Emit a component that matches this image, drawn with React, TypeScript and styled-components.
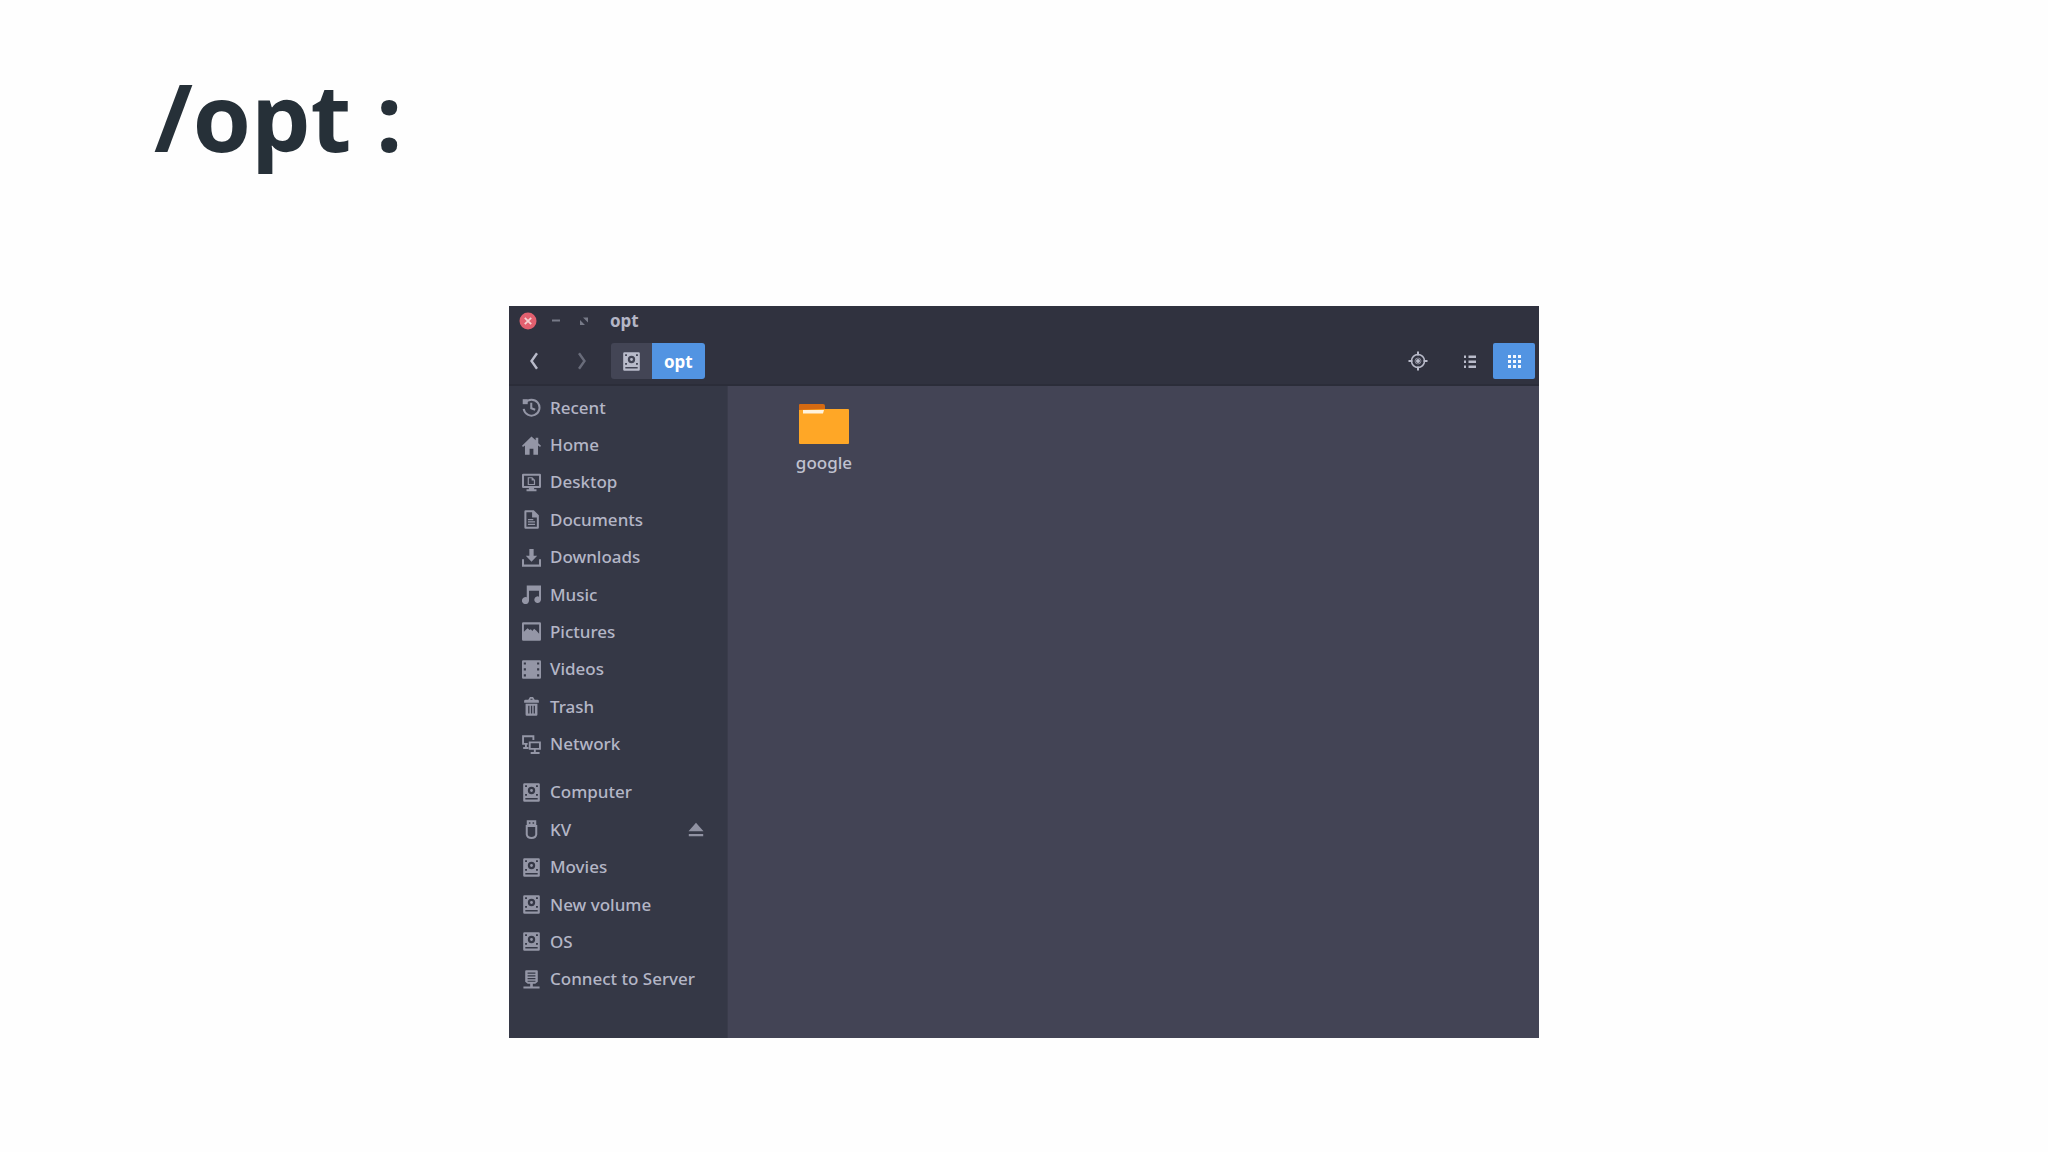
import React from "react";
import styled, { createGlobalStyle } from "styled-components";

const GlobalStyle = createGlobalStyle`
  * { box-sizing: border-box; }
  body { margin: 0; background: #fefefe; }
  button { font: inherit; color: inherit; border: 0; padding: 0; background: none; cursor: pointer; }
  svg { display: block; flex: none; }
`;

const uiFont = `"Noto Sans", "Open Sans", sans-serif`;

const Slide = styled.main`
  min-height: 100vh;
  display: flex;
  flex-direction: column;
  padding: 56px 154px 114px;
  font-family: ${uiFont};
`;

const SlideTitle = styled.h1`
  margin: 0 0 130px;
  font-family: "Open Sans", "Noto Sans", sans-serif;
  font-size: 94px;
  line-height: 120px;
  font-weight: 700;
  color: #263038;
`;

const Window = styled.section`
  width: 59.2%;
  aspect-ratio: 1030 / 732;
  align-self: center;
  display: flex;
  flex-direction: column;
  background: #434455;
  color: #b4b6c6;
`;

const Header = styled.header`
  background: #30323f;
  border-bottom: 2px solid #2b2d39;
`;

const TitleBar = styled.div`
  display: flex;
  align-items: center;
  height: 29px;
  padding-left: 9px;
`;

const WindowControls = styled.div`
  display: flex;
  gap: 8px;
  margin-right: 16px;
`;

const ControlButton = styled.button`
  width: 20px;
  height: 20px;
  display: grid;
  place-items: center;
  color: #777a88;
`;

const WindowTitle = styled.h2`
  margin: 0;
  font-size: 17px;
  line-height: 24px;
  font-weight: 700;
`;

const Toolbar = styled.nav`
  display: flex;
  align-items: center;
  padding: 8px 4px 5px;
`;

const ToolButton = styled.button<{ $active?: boolean; $dim?: boolean }>`
  width: 42px;
  height: 36px;
  display: grid;
  place-items: center;
  border-radius: 2px;
  color: ${(p) => (p.$active ? "#f4f8fe" : p.$dim ? "#696c7a" : "#b9bbca")};
  background: ${(p) => (p.$active ? "#5294e2" : "transparent")};
`;

const History = styled.div`
  display: flex;
  gap: 6px;
  margin-right: 8px;
`;

const PathBar = styled.div`
  display: flex;
  border-radius: 3px;
  overflow: hidden;
`;

const PathButton = styled.button<{ $current?: boolean }>`
  height: 36px;
  display: grid;
  place-items: center;
  padding: 0 ${(p) => (p.$current ? "12px" : "11px")};
  font-size: 17px;
  font-weight: 700;
  color: ${(p) => (p.$current ? "#ffffff" : "#b9bbca")};
  background: ${(p) => (p.$current ? "#5294e2" : "#434555")};
`;

const ViewTools = styled.div`
  display: flex;
  gap: 2px;
  margin-left: auto;
`;

const LocateTool = styled.div`
  margin-right: 8px;
`;

const Body = styled.div`
  flex: 1;
  display: flex;
`;

const Sidebar = styled.aside`
  width: 219px;
  display: flex;
  flex-direction: column;
  gap: 11px;
  padding: 3px 0 40px;
  background: #353846;
  border-right: 1px solid #3a3c4b;
`;

const PlaceList = styled.ul<{ $rows: number }>`
  flex: ${(p) => p.$rows} 1 0;
  display: flex;
  flex-direction: column;
  margin: 0;
  padding: 0;
  list-style: none;
`;

const PlaceRow = styled.li`
  flex: 1 1 0;
  display: flex;
  align-items: center;
  padding: 0 23px 0 13px;
`;

const PlaceLink = styled.a`
  flex: 1;
  display: flex;
  align-items: center;
  gap: 9px;
  font-size: 17px;
  line-height: 24px;
  font-weight: 500;
  color: #b4b6c6;
  text-decoration: none;
  svg { color: #9496a6; }
`;

const EjectButton = styled.button`
  color: #9092a2;
`;

const Files = styled.div`
  flex: 1;
  display: flex;
  align-items: flex-start;
  padding: 18px 16px;
`;

const FileItem = styled.button`
  width: 160px;
  display: flex;
  flex-direction: column;
  align-items: center;
  gap: 6px;
  font-size: 17px;
  line-height: 24px;
  font-weight: 500;
  color: #c0c2d0;
`;

const Glyph = ({ children, size = 19 }: { children: React.ReactNode; size?: number }) => (
  <svg width={size} height={size} viewBox="0 0 16 16" fill="currentColor" aria-hidden="true">
    {children}
  </svg>
);

const Drive = () => (
  <path
    fillRule="evenodd"
    d="M2 0.200h12q1 0 1 1v13.600q0 1-1 1H2q-1 0-1-1v-13.600q0-1 1-1ZM2.800 12.700v1.200h10.400v-1.200ZM8 3.200a3.100 3.100 0 1 0 0 6.200a3.100 3.100 0 0 0 0-6.200ZM8 5.100a1.200 1.200 0 1 1 0 2.400a1.200 1.200 0 0 1 0-2.400ZM2.600 1.800v1.500h1.600V1.800ZM11.800 1.800v1.500h1.600V1.800ZM2.600 9.300v1.500h1.600V9.300ZM11.800 9.300v1.500h1.600V9.300Z"
  />
);

const glyphs = {
  recent: (
    <g fill="none" stroke="currentColor" strokeWidth="1.700">
      <path d="M2.600 4.200A6.700 6.700 0 1 1 1.400 9.200" />
      <path d="M7.800 4v4.600l3.300 1.300" />
      <path d="M.6 1h4.200v4.200H.6z" fill="currentColor" stroke="none" />
    </g>
  ),
  home: <path d="M8 .5 0 8.300l.8.900L2.500 8v7.700h3.900v-5h3.200v5h3.900V8l1.700 1.200.8-.9-2.300-2.200V1.400h-2.200v2.100Z" />,
  desktop: (
    <>
      <path fillRule="evenodd" d="M1 .6h14q1 0 1 1v10q0 1-1 1H1q-1 0-1-1V1.600q0-1 1-1ZM1.700 2.300v8.600h12.600V2.300Z" />
      <path d="M5.300 4h3.200l2 2v3.700H5.300z" fill="none" stroke="currentColor" />
      <path d="M8.100 3.700v2.700h2.600M5.800 12h4.400v1.700h2v1.700H3.800v-1.700h2z" />
    </>
  ),
  documents: (
    <>
      <path fillRule="evenodd" d="M3 .2h6.900L14.200 4.500v10.300q0 1-1 1H3q-1 0-1-1V1.200q0-1 1-1ZM3.700 1.900v12.200h8.800V6.300H8.500V1.900Z" />
      <path d="M5 7.500h4.500v1.100H5zM5 9.500h6v1.100H5zM5 11.500h6v1.100H5z" />
    </>
  ),
  downloads: <path d="M6.200.8h3.600v5.700h3L8 11.500 3.200 6.500h3ZM0 9.500h1.700v4.400h12.600V9.500H16v6.200H0z" />,
  music: <path fillRule="evenodd" d="M4 .5H16v12a2.800 2.800 0 1 1-1.700-2.700V4.800H5.900v8.200a3 3 0 1 1-1.900-2.700Z" />,
  pictures: <path fillRule="evenodd" d="M1 .2h14q1 0 1 1v13.600q0 1-1 1H1q-1 0-1-1v-13.600q0-1 1-1ZM1.600 2v6.300L3.500 6.300l1.300-1 1.500 1.500 1.200-.7 1.200 1.500 1.500-2 2 1.700 2.200 2.500V2Z" />,
  videos: (
    <path
      fillRule="evenodd"
      d="M1 .2h14q1 0 1 1v13.600q0 1-1 1H1q-1 0-1-1V1.200q0-1 1-1ZM1.500 2v1.800h1.800V2ZM1.500 7v1.800h1.800V7ZM1.500 12v1.800h1.800V12ZM12.700 2v1.800h1.800V2ZM12.700 7v1.800h1.800V7ZM12.700 12v1.800h1.800V12Z"
    />
  ),
  trash: (
    <path
      fillRule="evenodd"
      d="M5.300 2.300 6.700.1h2.600l1.400 2.200H13q1.200 0 1.200 1v1.500H1.800V3.300q0-1 1.200-1ZM7 2.300h2L8.600 1.500H7.400ZM3 5.600h10v9.200q0 1-1 1H4q-1 0-1-1ZM5.200 7.300v6.500h1.100V7.300ZM7.500 7.300v6.500h1.100V7.300ZM9.800 7.300v6.500h1.100V7.300Z"
    />
  ),
  network: (
    <g fill="none" stroke="currentColor" strokeWidth="1.600">
      <path d="M4.800 7.500H.9V1h8.700v3.200M1 11h4.500M3.300 7.500V11" />
      <path d="M6.500 6.200h8.600v5.500H6.500zM10.800 11.700v3.200M7.300 15.100h7.500" />
    </g>
  ),
  drive: <Drive />,
  usb: (
    <>
      <path fillRule="evenodd" d="M4 .2h8v4.600H4ZM5.800 1.900v1.200h1.300V1.900ZM8.900 1.900v1.200h1.300V1.900Z" />
      <path d="M4 5h8v7.200q-.5 2.900-4 2.900t-4-2.900z" fill="none" stroke="currentColor" strokeWidth="1.700" />
    </>
  ),
  server: (
    <path fillRule="evenodd" d="M3.500.2h9q.8 0 .8.800v8.900l-2.100 1.700H9.100v2.300h5.700v1.700H1.200v-1.700h5.700v-2.300H4.800L2.700 9.900V1q0-.8.800-.8ZM4.700 2.100v1h6.600v-1ZM4.700 4.400v1h6.600v-1ZM4.700 6.700v1h6.600v-1ZM4.700 9v.9h6.600V9Z" />
  ),
};

type Place = { label: string; glyph: keyof typeof glyphs; removable?: boolean };

const places: Place[] = [
  { label: "Recent", glyph: "recent" },
  { label: "Home", glyph: "home" },
  { label: "Desktop", glyph: "desktop" },
  { label: "Documents", glyph: "documents" },
  { label: "Downloads", glyph: "downloads" },
  { label: "Music", glyph: "music" },
  { label: "Pictures", glyph: "pictures" },
  { label: "Videos", glyph: "videos" },
  { label: "Trash", glyph: "trash" },
  { label: "Network", glyph: "network" },
];

const devices: Place[] = [
  { label: "Computer", glyph: "drive" },
  { label: "KV", glyph: "usb", removable: true },
  { label: "Movies", glyph: "drive" },
  { label: "New volume", glyph: "drive" },
  { label: "OS", glyph: "drive" },
  { label: "Connect to Server", glyph: "server" },
];

const Places = ({ items }: { items: Place[] }) => (
  <PlaceList $rows={items.length}>
    {items.map((item) => (
      <PlaceRow key={item.label}>
        <PlaceLink href="#">
          <Glyph>{glyphs[item.glyph]}</Glyph>
          {item.label}
        </PlaceLink>
        {item.removable && (
          <EjectButton aria-label="Eject">
            <Glyph size={16}>
              <path d="M8 .8 15.500 9.200H.5ZM.8 12h14.400v2.300H.8z" />
            </Glyph>
          </EjectButton>
        )}
      </PlaceRow>
    ))}
  </PlaceList>
);

export default function App() {
  return (
    <Slide>
      <GlobalStyle />
      <SlideTitle>/opt :</SlideTitle>
      <Window aria-label="File manager">
        <Header>
          <TitleBar>
            <WindowControls>
              <ControlButton aria-label="Close">
                <svg width="18" height="18" viewBox="0 0 18 18" aria-hidden="true">
                  <circle cx="9" cy="9" r="8.500" fill="#e2606f" />
                  <path d="m5.800 5.800 6.400 6.400m0-6.400-6.400 6.400" stroke="#f6d3d3" strokeWidth="1.800" />
                </svg>
              </ControlButton>
              <ControlButton aria-label="Minimize">
                <svg width="8" height="3" viewBox="0 0 8 3" aria-hidden="true">
                  <path d="M0 .5h8v2H0z" fill="currentColor" />
                </svg>
              </ControlButton>
              <ControlButton aria-label="Maximize">
                <svg width="10" height="10" viewBox="0 0 10 10" fill="currentColor" aria-hidden="true">
                  <path d="M4 1.500h5v5zM1 4v5h5z" />
                </svg>
              </ControlButton>
            </WindowControls>
            <WindowTitle>opt</WindowTitle>
          </TitleBar>
          <Toolbar>
            <History>
              <ToolButton aria-label="Back">
                <svg width="10" height="18" viewBox="0 0 10 18" fill="none" stroke="currentColor" strokeWidth="2.400" aria-hidden="true">
                  <path d="M8 1.200 2.500 9 8 16.800" />
                </svg>
              </ToolButton>
              <ToolButton aria-label="Forward" $dim>
                <svg width="10" height="18" viewBox="0 0 10 18" fill="none" stroke="currentColor" strokeWidth="2.400" aria-hidden="true">
                  <path d="M2 1.200 7.500 9 2 16.800" />
                </svg>
              </ToolButton>
            </History>
            <PathBar>
              <PathButton aria-label="Root">
                <Glyph>
                  <Drive />
                </Glyph>
              </PathButton>
              <PathButton $current>opt</PathButton>
            </PathBar>
            <ViewTools>
              <LocateTool>
                <ToolButton aria-label="Enter location">
                  <svg width="20" height="20" viewBox="0 0 20 20" fill="none" stroke="currentColor" aria-hidden="true">
                    <circle cx="10" cy="10" r="6.500" strokeWidth="1.500" />
                    <circle cx="10" cy="10" r="3" strokeWidth="1" opacity=".6" />
                    <circle cx="10" cy="10" r="2" fill="currentColor" stroke="none" />
                    <path d="M10 .5v4M10 15.500v4M.5 10h4M15.500 10h4" strokeWidth="2" />
                  </svg>
                </ToolButton>
              </LocateTool>
              <ToolButton aria-label="List view">
                <svg width="12" height="13" viewBox="0 0 12 13" fill="currentColor" aria-hidden="true">
                  <path d="M0 .5h2v2.500H0zM4.500.5H12v2.500H4.500zM0 5.500h2V8H0zM4.500 5.500H12V8H4.500zM0 10.500h2V13H0zM4.500 10.500H12V13H4.500z" />
                </svg>
              </ToolButton>
              <ToolButton aria-label="Icon view" aria-pressed="true" $active>
                <svg width="13" height="13" viewBox="0 0 13 13" fill="currentColor" aria-hidden="true">
                  <path d="M0 0h3v3H0zM5 0h3v3H5zM10 0h3v3h-3zM0 5h3v3H0zM5 5h3v3H5zM10 5h3v3h-3zM0 10h3v3H0zM5 10h3v3H5zM10 10h3v3h-3z" />
                </svg>
              </ToolButton>
            </ViewTools>
          </Toolbar>
        </Header>
        <Body>
          <Sidebar>
            <Places items={places} />
            <Places items={devices} />
          </Sidebar>
          <Files>
            <FileItem>
              <svg width="50" height="41" viewBox="0 0 50 41" aria-hidden="true">
                <path d="M1 0h23q2 0 2 2v5H0V1q0-1 1-1Z" fill="#d56a12" />
                <path d="M0 6 25 5h24q1 0 1 1v33q0 1-1 1H1q-1 0-1-1Z" fill="#ffa726" />
                <path d="M4 6h21l-1 3.500H4z" fill="#fff3dc" />
              </svg>
              google
            </FileItem>
          </Files>
        </Body>
      </Window>
    </Slide>
  );
}
